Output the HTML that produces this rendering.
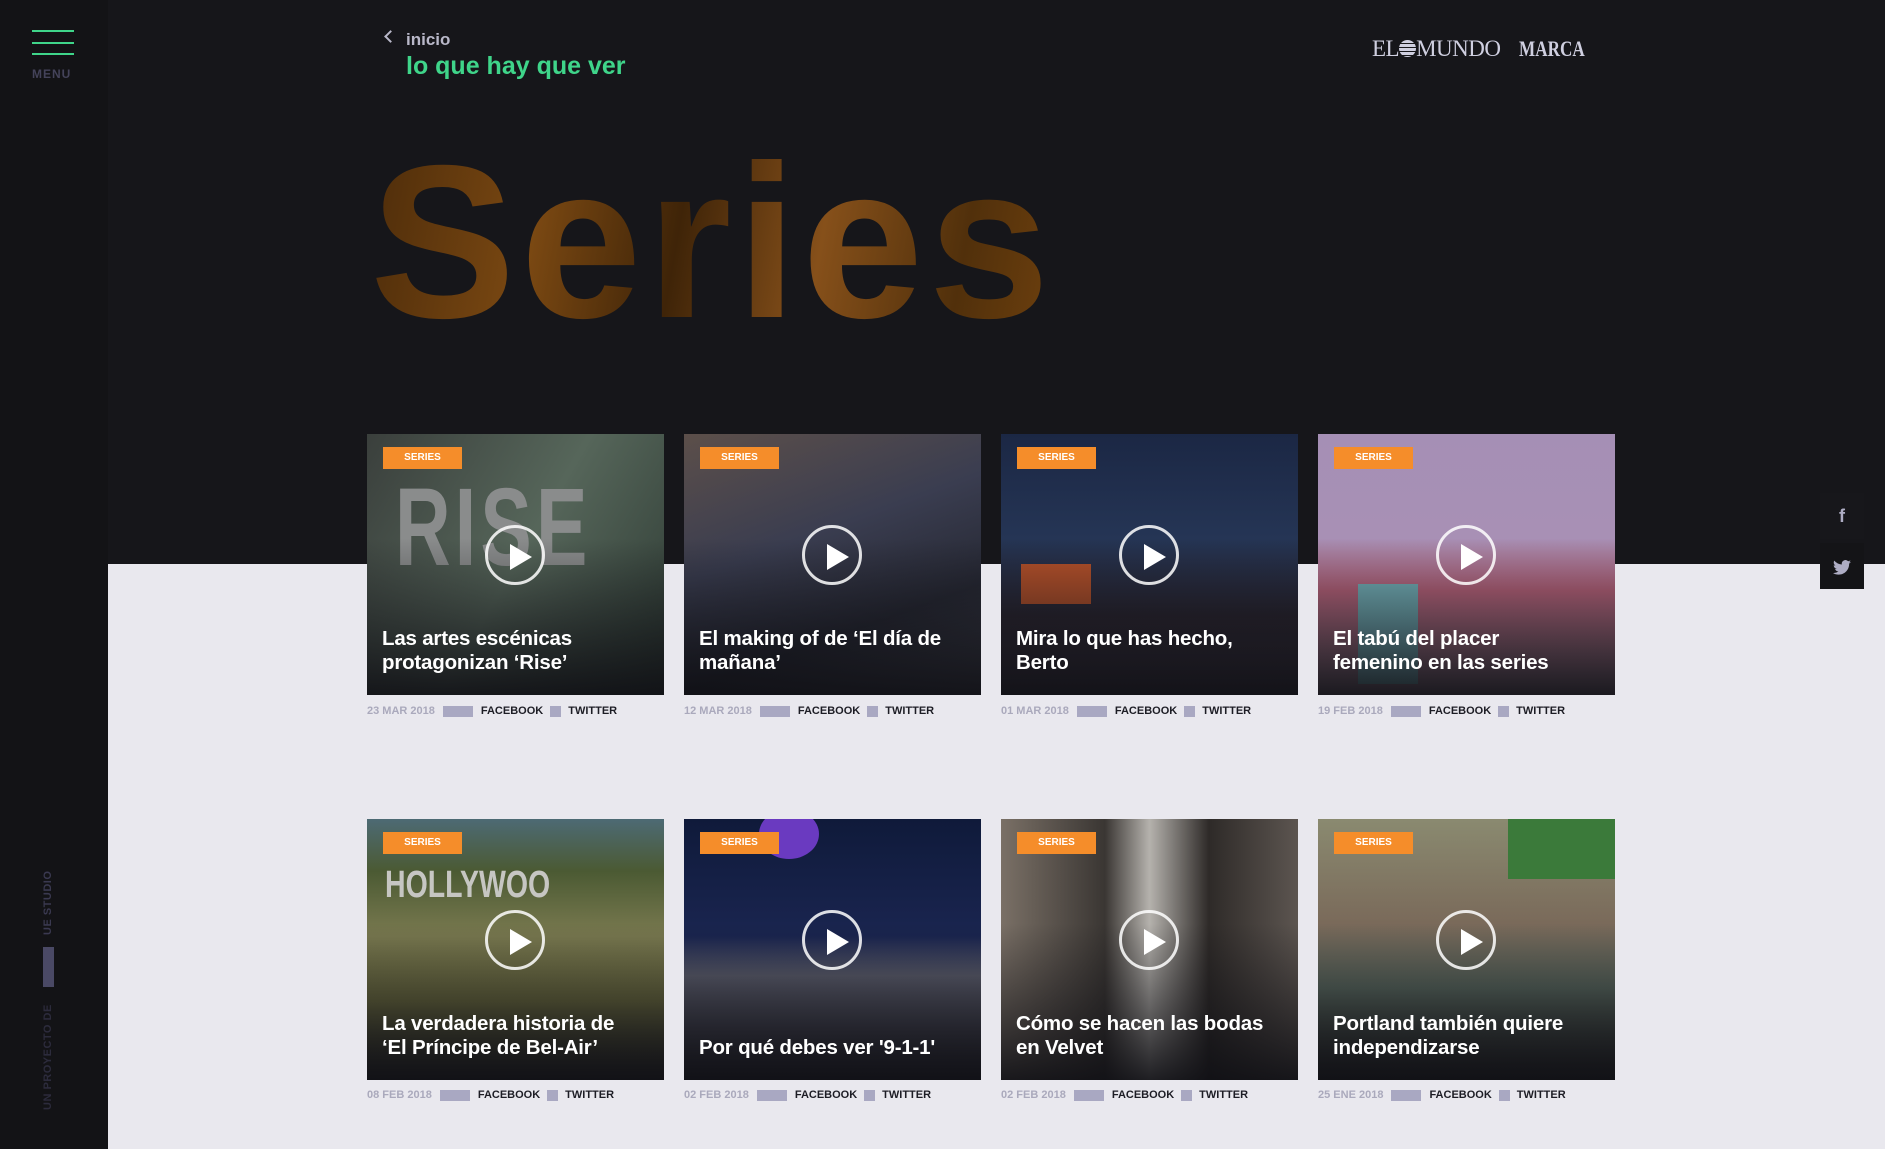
<!DOCTYPE html>
<html><head><meta charset="utf-8">
<style>
*{margin:0;padding:0;box-sizing:border-box}
body{width:1885px;height:1149px;overflow:hidden;background:#e9e8ee;font-family:"Liberation Sans",sans-serif;position:relative}
.top{position:absolute;left:0;top:0;width:1885px;height:564px;background:#16161a}
.side{position:absolute;left:0;top:0;width:108px;height:1149px;background:#131316}
.hb{position:absolute;left:32px;width:42px;height:2px;background:#3fd58a}
.menu{position:absolute;left:32px;top:67px;font-size:12px;font-weight:bold;color:#44435a;letter-spacing:1px}
.vt{position:absolute;transform:rotate(-90deg);transform-origin:left top;font-size:11px;font-weight:bold;letter-spacing:.5px;white-space:nowrap}
.arrow{position:absolute;left:386px;top:32px;width:9px;height:9px;border-left:2px solid #b9b8c9;border-bottom:2px solid #b9b8c9;transform:rotate(45deg)}
.inicio{position:absolute;left:406px;top:30px;font-size:17px;font-weight:bold;color:#b9b8c9}
.lq{position:absolute;left:406px;top:52px;font-size:25px;font-weight:bold;color:#3fd58a}
.logo1{position:absolute;left:1372px;top:36px;font-family:"Liberation Serif",serif;font-size:23px;color:#cfcfe0;letter-spacing:-.5px}
.logo2{position:absolute;left:1519px;top:36px;font-family:"Liberation Serif",serif;font-weight:bold;font-size:22px;color:#cfcfe0;transform:scaleX(.78);transform-origin:left}
.series{position:absolute;left:370px;top:134px;font-size:218px;font-weight:bold;letter-spacing:5px;line-height:1;background:linear-gradient(100deg,#4d2c0a,#7a4812 25%,#3f2408 45%,#86501a 65%,#51300b 85%,#6e400e);-webkit-background-clip:text;background-clip:text;color:transparent}
.card{position:absolute;width:297px;height:261px;overflow:hidden}
.card .ov{position:absolute;inset:0;background:linear-gradient(to bottom,rgba(0,0,0,0) 40%,rgba(15,15,20,.9) 100%)}
.tag{position:absolute;left:16px;top:13px;width:79px;height:22px;background:#f58d2a;color:#fff;font-size:10px;font-weight:bold;text-align:center;line-height:22px}
.play{position:absolute;left:118px;top:91px;width:60px;height:60px;border:3px solid rgba(255,255,255,.85);border-radius:50%}
.play:after{content:"";position:absolute;left:22px;top:16px;border-left:22px solid #fff;border-top:13px solid transparent;border-bottom:13px solid transparent}
.tt{position:absolute;left:15px;bottom:20px;width:260px;color:#fff;font-size:20.5px;font-weight:bold;line-height:24px;letter-spacing:-.2px}
.meta{position:absolute;font-size:11px;font-weight:bold;color:#1d1d25;white-space:nowrap;display:flex;align-items:center}
.meta .d{color:#aaa9bc}
.meta .b{display:inline-block;width:30px;height:11px;background:#a9a8c2;margin:0 8px}
.meta .s{display:inline-block;width:11px;height:11px;background:#a9a8c2;margin:0 7px}
.soc{position:absolute;left:1820px;width:44px;height:46px;background:#17171b;color:#aeadc4;text-align:center;line-height:46px;font-weight:bold;font-size:18px}
</style></head><body>
<div class="top"></div>
<div class="side">
<div class="hb" style="top:30px"></div><div class="hb" style="top:42px"></div><div class="hb" style="top:53px"></div>
<div class="menu">MENU</div>
<div class="vt" style="left:42px;top:935px;color:#3a3950">UE STUDIO</div>
<div style="position:absolute;left:43px;top:947px;width:11px;height:40px;background:#4a4965"></div>
<div class="vt" style="left:42px;top:1110px;color:#2c2b3c">UN PROYECTO DE</div>
</div>
<div class="arrow"></div>
<div class="inicio">inicio</div>
<div class="lq">lo que hay que ver</div>
<div class="logo1">EL<span style="display:inline-block;width:17px;height:17px;border-radius:50%;background:repeating-linear-gradient(#cfcfe0 0 3px,#16161a 3px 4px);vertical-align:-1px"></span>MUNDO</div>
<div class="logo2">MARCA</div>
<div class="series">Series</div>
<div class="soc" style="top:493px">f</div>
<div class="soc" style="top:543px;background:#141417"><svg width="18" height="15" viewBox="0 0 24 20" style="vertical-align:middle"><path fill="#aeadc4" d="M24 2.4a10 10 0 0 1-2.8.8A5 5 0 0 0 23.3.5a10 10 0 0 1-3.1 1.2A4.9 4.9 0 0 0 11.8 6 14 14 0 0 1 1.7.9a4.9 4.9 0 0 0 1.5 6.6A4.9 4.9 0 0 1 1 6.9a4.9 4.9 0 0 0 3.9 4.8 5 5 0 0 1-2.2.1 4.9 4.9 0 0 0 4.6 3.4A9.9 9.9 0 0 1 0 17.3 14 14 0 0 0 7.5 19.5c9 0 14-7.5 14-14v-.6A10 10 0 0 0 24 2.4z"/></svg></div>

<div class="card" style="left:367px;top:434px;background:linear-gradient(120deg,#3a3f3c,#56665a 50%,#2d3a33)"><div style="position:absolute;left:28px;top:30px;font-size:110px;font-weight:bold;color:#8a8c8c;letter-spacing:6px;transform:scaleX(.7);transform-origin:left">RISE</div><div class="ov"></div><div class="tag">SERIES</div><div class="play"></div><div class="tt">Las artes escénicas protagonizan ‘Rise’</div></div>
<div class="card" style="left:684px;top:434px;background:linear-gradient(160deg,#5c4f4a,#3a3d50 40%,#262833 70%,#40424d)"><div class="ov"></div><div class="tag">SERIES</div><div class="play"></div><div class="tt">El making of de ‘El día de mañana’</div></div>
<div class="card" style="left:1001px;top:434px;background:linear-gradient(180deg,#1b2744,#253555 40%,#2a2530 70%,#3a3440)"><div style="position:absolute;left:20px;top:130px;width:70px;height:40px;background:#b8522a"></div><div class="ov"></div><div class="tag">SERIES</div><div class="play"></div><div class="tt" style="width:240px">Mira lo que has hecho, Berto</div></div>
<div class="card" style="left:1318px;top:434px;background:linear-gradient(180deg,#a58fb5 0,#a890b5 40%,#c0667f 60%,#8e7a8a 100%)"><div style="position:absolute;left:40px;top:150px;width:60px;height:100px;background:#78b8c0"></div><div class="ov"></div><div class="tag">SERIES</div><div class="play"></div><div class="tt" style="width:240px">El tabú del placer femenino en las series</div></div>

<div class="card" style="left:367px;top:819px;background:linear-gradient(180deg,#4d6a74 0,#4b5a33 20%,#7a7a50 45%,#6b6b3e 70%,#2e2f2e)"><div style="position:absolute;left:18px;top:45px;font-size:38px;font-weight:bold;color:#c6c6c2;transform:scaleX(.75);transform-origin:left">HOLLYWOO</div><div class="ov"></div><div class="tag">SERIES</div><div class="play"></div><div class="tt" style="width:255px">La verdadera historia de ‘El Príncipe de Bel-Air’</div></div>
<div class="card" style="left:684px;top:819px;background:linear-gradient(180deg,#0f1a3a,#1a2550 45%,#5e6070 60%,#2b2b35)"><div style="position:absolute;left:75px;top:-10px;width:60px;height:50px;border-radius:50%;background:#6a3ac0"></div><div class="ov"></div><div class="tag">SERIES</div><div class="play"></div><div class="tt">Por qué debes ver '9-1-1'</div></div>
<div class="card" style="left:1001px;top:819px;background:linear-gradient(90deg,#7a7066,#3a3633 35%,#b5b2ad 50%,#2e2a28 70%,#5c5550)"><div class="ov"></div><div class="tag">SERIES</div><div class="play"></div><div class="tt" style="width:250px">Cómo se hacen las bodas en Velvet</div></div>
<div class="card" style="left:1318px;top:819px;background:linear-gradient(180deg,#8a8a70,#7a6a5a 40%,#5a6a60 65%,#2d2d2d)"><div style="position:absolute;left:190px;top:0;width:107px;height:60px;background:#3b7a3a"></div><div class="ov"></div><div class="tag">SERIES</div><div class="play"></div><div class="tt">Portland también quiere independizarse</div></div>

<div class="meta" style="left:367px;top:705px"><span class="d">23 MAR 2018</span><span class="b"></span>FACEBOOK<span class="s"></span>TWITTER</div>
<div class="meta" style="left:684px;top:705px"><span class="d">12 MAR 2018</span><span class="b"></span>FACEBOOK<span class="s"></span>TWITTER</div>
<div class="meta" style="left:1001px;top:705px"><span class="d">01 MAR 2018</span><span class="b"></span>FACEBOOK<span class="s"></span>TWITTER</div>
<div class="meta" style="left:1318px;top:705px"><span class="d">19 FEB 2018</span><span class="b"></span>FACEBOOK<span class="s"></span>TWITTER</div>
<div class="meta" style="left:367px;top:1089px"><span class="d">08 FEB 2018</span><span class="b"></span>FACEBOOK<span class="s"></span>TWITTER</div>
<div class="meta" style="left:684px;top:1089px"><span class="d">02 FEB 2018</span><span class="b"></span>FACEBOOK<span class="s"></span>TWITTER</div>
<div class="meta" style="left:1001px;top:1089px"><span class="d">02 FEB 2018</span><span class="b"></span>FACEBOOK<span class="s"></span>TWITTER</div>
<div class="meta" style="left:1318px;top:1089px"><span class="d">25 ENE 2018</span><span class="b"></span>FACEBOOK<span class="s"></span>TWITTER</div>
</body></html>
